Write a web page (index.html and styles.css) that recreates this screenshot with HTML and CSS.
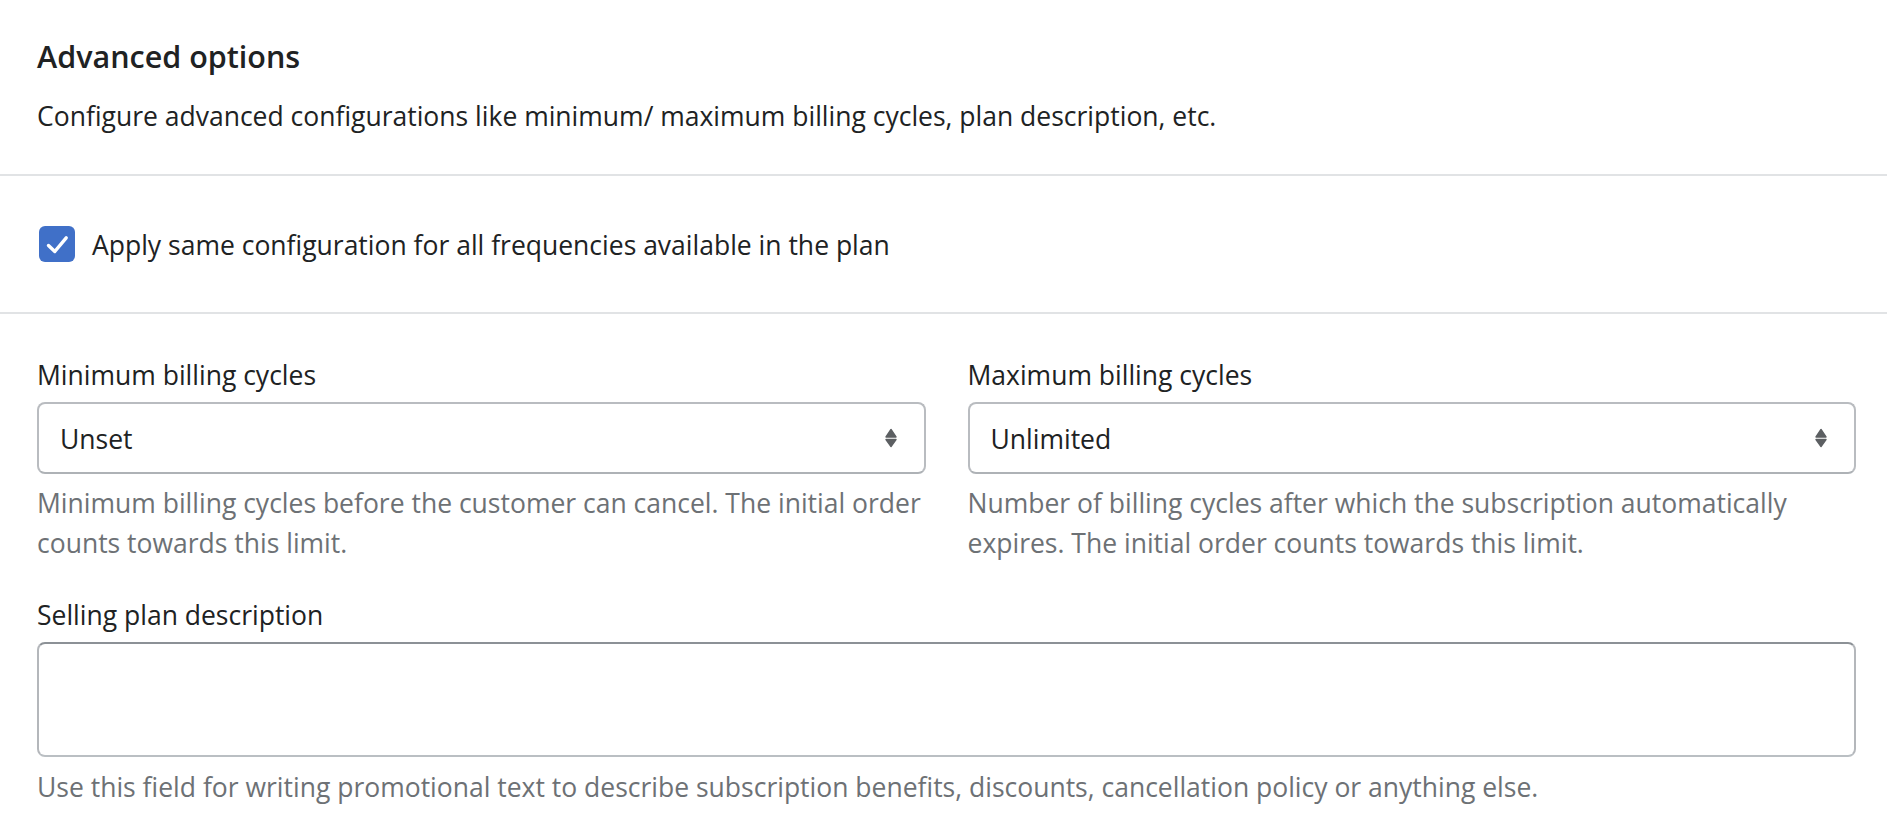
FILE: index.html
```html
<!DOCTYPE html>
<html lang="en">
<head>
<meta charset="utf-8">
<title>Advanced options</title>
<link rel="stylesheet" href="styles.css">
</head>
<body>
<div class="card">
  <div class="section header">
    <h2 class="title">Advanced options</h2>
    <p class="desc">Configure advanced configurations like minimum/ maximum billing cycles, plan description, etc.</p>
  </div>
  <div class="section check-section">
    <label class="check-row">
      <span class="checkbox">
        <svg width="36" height="36" viewBox="0 0 36 36"><path d="M9.5 19.5 L15.8 25.5 L27.2 11.8" fill="none" stroke="#fff" stroke-width="3.4" stroke-linecap="round" stroke-linejoin="round"/></svg>
      </span>
      <span class="check-text">Apply same configuration for all frequencies available in the plan</span>
    </label>
  </div>
  <div class="section form">
    <div class="row">
      <div class="field">
        <div class="label">Minimum billing cycles</div>
        <div class="select">
          <span>Unset</span>
          <svg class="arrows" width="12" height="20" viewBox="0 0 12 20"><path d="M1 9 L11 9 L6 1.5 Z M1 11.5 L11 11.5 L6 18.5 Z" fill="#5c5f62" stroke="#5c5f62" stroke-width="1.4" stroke-linejoin="round"/></svg>
        </div>
        <div class="help">Minimum billing cycles before the customer can cancel. The initial order counts towards this limit.</div>
      </div>
      <div class="field">
        <div class="label">Maximum billing cycles</div>
        <div class="select">
          <span>Unlimited</span>
          <svg class="arrows" width="12" height="20" viewBox="0 0 12 20"><path d="M1 9 L11 9 L6 1.5 Z M1 11.5 L11 11.5 L6 18.5 Z" fill="#5c5f62" stroke="#5c5f62" stroke-width="1.4" stroke-linejoin="round"/></svg>
        </div>
        <div class="help">Number of billing cycles after which the subscription automatically expires. The initial order counts towards this limit.</div>
      </div>
    </div>
    <div class="field full">
      <div class="label">Selling plan description</div>
      <textarea class="textarea" aria-label="Selling plan description"></textarea>
      <div class="help">Use this field for writing promotional text to describe subscription benefits, discounts, cancellation policy or anything else.</div>
    </div>
  </div>
</div>
</body>
</html>
```
FILE: styles.css
```css
html, body {
  margin: 0;
  padding: 0;
  background: #ffffff;
}
body {
  font-family: "Open Sans", "Noto Sans", sans-serif;
  color: #202223;
  font-size: 26.5px;
  line-height: 40px;
}
.section {
  padding-left: 37px;
  padding-right: 31px;
}
.header {
  padding-top: 32px;
  padding-bottom: 38px;
}
.title {
  margin: 0;
  font-size: 30.5px;
  font-weight: 600;
  line-height: 48px;
}
.desc {
  margin: 16px 0 0;
}
.check-section {
  border-top: 2px solid #e1e3e5;
  padding-top: 48px;
  padding-bottom: 48px;
}
.check-row {
  display: flex;
  align-items: center;
  gap: 17px;
  height: 40px;
}
.check-text {
  padding-top: 2px;
}
.checkbox {
  width: 36px;
  height: 36px;
  margin-left: 2px;
  border-radius: 6px;
  background: #4070c8;
  display: flex;
  flex: none;
}
.form {
  border-top: 2px solid #e1e3e5;
  padding-top: 41px;
  padding-bottom: 20px;
}
.row {
  display: grid;
  grid-template-columns: 1fr 1fr;
  gap: 42px;
}
.label {
  margin-bottom: 7px;
}
.select {
  box-sizing: border-box;
  height: 72px;
  border: 2px solid #b9bcc0;
  border-bottom-color: #aeb2b6;
  border-radius: 8px;
  padding: 2px 27px 0 21px;
  display: flex;
  align-items: center;
  justify-content: space-between;
  background: #fff;
}
.select .arrows {
  margin-top: -2px;
}
.help {
  margin-top: 9px;
  color: #6d7175;
}
.full {
  margin-top: 32px;
}
.textarea {
  display: block;
  box-sizing: border-box;
  width: 100%;
  height: 115px;
  margin: 0;
  border: 2px solid #b4b7bb;
  border-top-color: #8c9196;
  border-bottom-color: #babfc3;
  border-radius: 8px;
  resize: none;
  font: inherit;
  padding: 10px 21px;
  outline: none;
}
.full .help {
  margin-top: 10px;
}
```
